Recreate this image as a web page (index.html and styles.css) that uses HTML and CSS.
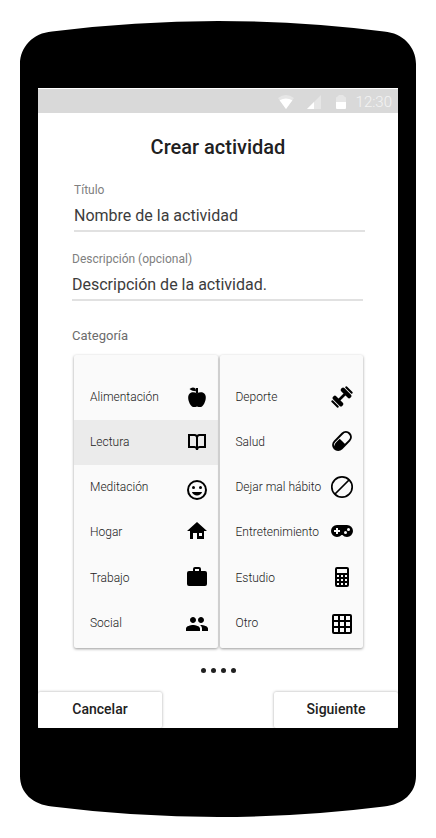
FILE: index.html
```html
<!DOCTYPE html>
<html lang="es">
<head>
<meta charset="utf-8">
<meta name="viewport" content="width=device-width, initial-scale=1">
<title>Crear actividad</title>
<link rel="stylesheet" href="styles.css">
</head>
<body>
<div class="phone">
  <svg class="cap" viewBox="0 0 396 68" preserveAspectRatio="none" aria-hidden="true"><path d="M0 68V44C0 27 13 13 32 11.5Q198-9.5 364 11.5C383 13 396 27 396 44V68Z"/></svg>
  <main class="screen">
    <div class="status">
      <svg viewBox="0 0 16 14" width="16" height="14" aria-hidden="true"><path fill="#e6e6e6" d="M0 3Q8-3 16 3L8 14Z"/><path fill="#fff" d="M1.6 5.2Q8 1.6 14.4 5.2L8 14Z"/></svg>
      <svg viewBox="0 0 16 14" width="16" height="14" aria-hidden="true"><path fill="#e6e6e6" d="M15 0V14H1Z"/><path fill="#fff" d="M8 7V14H1Z"/></svg>
      <svg viewBox="-2 0 12 14" width="12" height="14" aria-hidden="true"><path fill="#e6e6e6" d="M0 7V3Q0 2 1 2L3 0H7L9 2Q10 2 10 3V7Z"/><path fill="#fff" d="M0 7H10V13Q10 14 9 14H1Q0 14 0 13Z"/></svg>
      <time>12:30</time>
    </div>
    <h1>Crear actividad</h1>
    <form class="form">
      <div class="field inset">
        <label for="titulo">Título</label>
        <input id="titulo" type="text" value="Nombre de la actividad">
      </div>
      <div class="field">
        <label for="descripcion">Descripción (opcional)</label>
        <input id="descripcion" type="text" value="Descripción de la actividad.">
      </div>
      <h2 id="categoria">Categoría</h2>
      <div class="cards inset" role="group" aria-labelledby="categoria">
        <div class="card">
          <button type="button" class="option"><span>Alimentación</span>
            <svg viewBox="0 0 24 24" aria-hidden="true"><path d="M11 3h2v5h-2z"/><path d="M11 6.2C9.500 6.400 6.500 5.800 4.500 4Q7.500 1.200 10.500 3.400Q11 4.500 11 6.200Z"/><path d="M12 8.200C14 7 17.500 6.600 19.300 8.400C22.400 11 20.300 18.500 17 21.500C15.500 22.500 13.800 22 12 21.400C10.200 22 8.500 22.500 7 21.500C3.700 18.500 1.600 11 4.700 8.400C6.500 6.600 10 7 12 8.200Z"/></svg></button>
          <button type="button" class="option selected" aria-pressed="true"><span>Lectura</span>
            <svg viewBox="0 0 24 24" aria-hidden="true"><path d="M3 4H9.500Q11.300 4 12 5Q12.700 4 14.500 4H21V18H14.500Q13 18 13 20H11Q11 18 9.500 18H3ZM5 6V16H9.500Q10.500 16 11 16.400V7.500Q11 6 9.500 6ZM19 6H14.500Q13 6 13 7.500V16.400Q13.500 16 14.500 16H19Z" fill-rule="evenodd"/></svg></button>
          <button type="button" class="option"><span>Meditación</span>
            <svg viewBox="0 -3 24 24" aria-hidden="true"><circle cx="12" cy="12" r="9" fill="none" stroke="#000" stroke-width="2"/><circle cx="8.500" cy="9.500" r="1.500"/><circle cx="15.500" cy="9.500" r="1.500"/><path d="M6.900 14H17.100C16.300 16 14.300 17.500 12 17.500S7.700 16 6.900 14Z"/></svg></button>
          <button type="button" class="option"><span>Hogar</span>
            <svg viewBox="0 1 24 24" aria-hidden="true"><path d="M12 3L2 12H5V20H8V14H12V20H19V12H22ZM14 14H17V17H14Z" fill-rule="evenodd"/></svg></button>
          <button type="button" class="option"><span>Trabajo</span>
            <svg viewBox="0 1 24 24" aria-hidden="true"><path d="M10 2H14Q16 2 16 4V6H20Q22 6 22 8V19Q22 21 20 21H4Q2 21 2 19V8Q2 6 4 6H8V4Q8 2 10 2ZM10 4V6H14V4Z" fill-rule="evenodd"/></svg></button>
          <button type="button" class="option"><span>Social</span>
            <svg viewBox="0 -1 24 24" aria-hidden="true"><path d="M16 11c1.660 0 2.990-1.340 2.990-3S17.660 5 16 5s-3 1.340-3 3 1.340 3 3 3zm-8 0c1.660 0 2.990-1.340 2.990-3S9.660 5 8 5 5 6.340 5 8s1.340 3 3 3zm0 2c-2.330 0-7 1.170-7 3.500V19h14v-2.500c0-2.330-4.670-3.500-7-3.500zm8 0c-.29 0-.62.02-.97.05 1.160.84 1.970 1.970 1.970 3.450V19h6v-2.500c0-2.330-4.670-3.500-7-3.500z"/></svg></button>
        </div>
        <div class="card">
          <button type="button" class="option"><span>Deporte</span>
            <svg viewBox="0 0 24 24" aria-hidden="true"><g transform="rotate(-45 12 12)"><path d="M7 10.700H17V13.300H7Z"/><rect x="4" y="5.500" width="4.500" height="13" rx="1.800"/><rect x="15.500" y="5.500" width="4.500" height="13" rx="1.800"/><rect x="1.100" y="7.200" width="2.100" height="9.600" rx=".9"/><rect x="20.800" y="7.200" width="2.100" height="9.600" rx=".9"/></g></svg></button>
          <button type="button" class="option"><span>Salud</span>
            <svg viewBox="0 1 24 24" aria-hidden="true"><g transform="rotate(-45 12 12)"><rect x="1.500" y="7" width="21" height="10" rx="5" fill="none" stroke="#000" stroke-width="2"/><path d="M12 8.800V17H7A5 5 0 0 1 2 10.500Q4 8.800 7 8.800Z"/></g></svg></button>
          <button type="button" class="option"><span>Dejar mal hábito</span>
            <svg viewBox="0 0 24 24" aria-hidden="true"><g fill="none" stroke="#000" stroke-width="1.700"><circle cx="12" cy="12" r="10.200"/><path d="M5 19L19 5"/></g></svg></button>
          <button type="button" class="option"><span>Entretenimiento</span>
            <svg viewBox="0 1 24 24" aria-hidden="true"><path fill-rule="evenodd" d="M7 6H17A6 6 0 0 1 17 18C15.200 18 13.600 17.300 12.500 16H11.500C10.400 17.300 8.800 18 7 18A6 6 0 0 1 7 6ZM6 9V11H4V13H6V15H8V13H10V11H8V9ZM15.500 12A1.500 1.500 0 0 0 15.500 15A1.500 1.500 0 0 0 15.500 12ZM18.500 9A1.500 1.500 0 0 0 18.500 12A1.500 1.500 0 0 0 18.500 9Z"/></svg></button>
          <button type="button" class="option"><span>Estudio</span>
            <svg viewBox="0 1 24 24" aria-hidden="true"><path fill-rule="evenodd" d="M7 2H17Q19 2 19 4V20Q19 22 17 22H7Q5 22 5 20V4Q5 2 7 2ZM7 4V8H17V4ZM7 10V12H9V10ZM11 10V12H13V10ZM15 10V12H17V10ZM7 14V16H9V14ZM11 14V16H13V14ZM15 14V16H17V14ZM7 18V20H9V18ZM11 18V20H13V18ZM15 18V20H17V18Z"/></svg></button>
          <button type="button" class="option"><span>Otro</span>
            <svg viewBox="0 -1 24 24" aria-hidden="true"><path fill-rule="evenodd" d="M4 2H20Q22 2 22 4V20Q22 22 20 22H4Q2 22 2 20V4Q2 2 4 2ZM4 4V8H8V4ZM10 4V8H14V4ZM16 4V8H20V4ZM4 10V14H8V10ZM10 10V14H14V10ZM16 10V14H20V10ZM4 16V20H8V16ZM10 16V20H14V16ZM16 16V20H20V16Z"/></svg></button>
        </div>
      </div>
    </form>
    <div class="dots" aria-hidden="true"><i></i><i></i><i></i><i></i></div>
    <div class="actions">
      <button type="button">Cancelar</button>
      <button type="button">Siguiente</button>
    </div>
  </main>
  <svg class="cap cap-bottom" viewBox="0 0 396 90" preserveAspectRatio="none" aria-hidden="true"><path d="M0 0V48C0 65 13 76.500 32 78.500Q198 99.500 364 78.500C383 76.500 396 65 396 48V0Z"/></svg>
</div>
</body>
</html>
```
FILE: styles.css
```css
* {
  box-sizing: border-box;
}

body {
  margin: 0;
  padding: 20px;
  background: #fff;
  color: #212121;
  font-family: Roboto, "Liberation Sans", sans-serif;
}

button,
input {
  font: inherit;
  color: inherit;
}

.cap {
  display: block;
  width: 100%;
  height: 68px;
}

.cap-bottom {
  height: 90px;
}

.screen {
  display: flex;
  flex-direction: column;
  border: 0 solid #000;
  border-width: 0 18px;
  background: #fff;
  padding-top: 1px;
  overflow: hidden;
}

.status {
  display: flex;
  align-items: center;
  justify-content: flex-end;
  gap: 12px;
  height: 24px;
  padding: 1px 6px 0 0;
  background: #d9d9d9;
  color: #f4f4f4;
  font-size: 15px;
  font-weight: 300;
}

.status time {
  margin-left: -2px;
}

h1 {
  margin: 22px 0 0;
  font-size: 20px;
  line-height: 24px;
  font-weight: 500;
  text-align: center;
}

.form {
  padding: 23px 33px 0 34px;
}

.field {
  display: flex;
  flex-direction: column;
  gap: 4px;
  margin: 0 2px 19px 0;
}

.field.inset {
  margin: 0 0 19px 2px;
}

.cards.inset {
  margin: 0 2px;
}

.field label {
  color: #808080;
  font-size: 12px;
  line-height: 16px;
}

.field input {
  width: 100%;
  height: 30px;
  padding: 0 0 2px;
  border: 0;
  border-bottom: 2px solid #e1e1e1;
  background: none;
  font-size: 16px;
  color: #3c3c3c;
  outline: 0;
}

h2 {
  margin: 27px 0 11px;
  color: #6c6c6c;
  font-size: 13px;
  line-height: 16px;
  font-weight: 400;
}

.cards {
  display: grid;
  grid-template-columns: 1fr 1fr;
  gap: 2px;
}

.card {
  padding: 20px 0 3px;
  border-radius: 2px;
  background: #fafafa;
  box-shadow: 0 1px 3px rgba(0, 0, 0, 0.4);
}

.option {
  display: flex;
  align-items: center;
  justify-content: space-between;
  width: 100%;
  height: 45px;
  padding: 0 9px 2px 16px;
  border: 0;
  background: none;
  font-size: 12px;
  font-weight: 300;
  text-align: left;
  white-space: nowrap;
}

.option:nth-child(n + 5) {
  padding-bottom: 0;
}

.option svg {
  flex: none;
  width: 24px;
  height: 24px;
  overflow: visible;
}

.selected {
  background: #ebebeb;
}

.dots {
  display: flex;
  justify-content: center;
  gap: 5px;
  padding: 20px 0 19px;
}

.dots i {
  width: 5px;
  height: 5px;
  border-radius: 50%;
  background: #212121;
}

.actions {
  display: flex;
  justify-content: space-between;
}

.actions button {
  width: 124px;
  height: 36px;
  padding: 0 0 2px;
  border: 0;
  border-radius: 2px;
  background: #fff;
  box-shadow: 0 0 3px rgba(0, 0, 0, 0.35);
  font-size: 14px;
  font-weight: 500;
}
```
